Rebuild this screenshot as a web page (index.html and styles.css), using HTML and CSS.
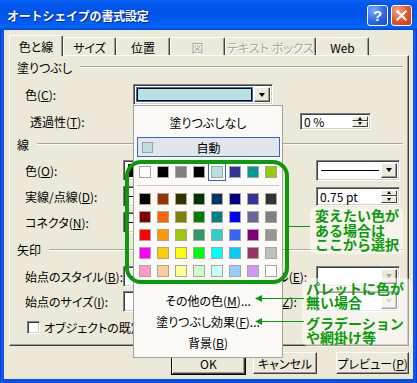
FILE: index.html
```html
<!DOCTYPE html>
<html lang="ja">
<head>
<meta charset="utf-8">
<title>オートシェイプの書式設定</title>
<link rel="stylesheet" href="styles.css">
</head>
<body>
<div class="window">
  <div class="titlebar">
    <span class="title">オートシェイプの書式設定</span>
    <div class="tb-btns">
      <span class="tb-btn help">?</span>
      <span class="tb-btn close"><svg width="11" height="11" viewBox="0 0 11 11"><path d="M1.5 1.5 L9.5 9.5 M9.5 1.5 L1.5 9.5" stroke="#fff" stroke-width="2.2" stroke-linecap="square"/></svg></span>
    </div>
  </div>
  <div class="client">
    <div class="tabs">
      <div class="tab sel w54">色と線</div>
      <div class="tab w53">サイズ</div>
      <div class="tab w54">位置</div>
      <div class="tab w55 dis">図</div>
      <div class="tab w91 dis">テキスト ボックス</div>
      <div class="tab w53">Web</div>
    </div>
    <div class="panel">
      <div class="grp h22"><span>塗りつぶし</span><span class="line"></span></div>
      <div class="row h33">
        <span class="lbl-c">色(<u>C</u>):</span>
        <span class="combo cfill w140"><span class="field"><span class="sw"></span></span><span class="dd"></span></span>
      </div>
      <div class="row h20 ind">
        <span class="lbl-t">透過性(<u>T</u>):</span>
        <span class="slider"></span>
        <span class="spin sp-t"><span class="val">0 %</span><span class="arr"><span class="up"></span><span class="dn"></span></span></span>
      </div>
      <div class="grp h26"><span>線</span><span class="line"></span></div>
      <div class="row h26">
        <span class="lbl-l">色(<u>O</u>):</span>
        <span class="combo w80"><span class="field"><span class="sw black"></span></span><span class="dd"></span></span>
        <span class="combo w84 push"><span class="field linefld"></span><span class="dd"></span></span>
      </div>
      <div class="row h26">
        <span class="lbl-l">実線/点線(<u>D</u>):</span>
        <span class="combo w80"><span class="field linefld"></span><span class="dd"></span></span>
        <span class="spin sp-w push"><span class="val">0.75 pt</span><span class="arr"><span class="up"></span><span class="dn"></span></span></span>
      </div>
      <div class="row h26">
        <span class="lbl-l">コネクタ(<u>N</u>):</span>
        <span class="combo w80"><span class="field linefld"></span><span class="dd"></span></span>
      </div>
      <div class="grp h29"><span>矢印</span><span class="line"></span></div>
      <div class="row h24">
        <span class="lbl-l">始点のスタイル(<u>B</u>):</span>
        <span class="combo w80"><span class="field linefld"></span><span class="dd"></span></span>
        <span class="lbl-r">終点のスタイル(<u>E</u>):</span>
        <span class="combo w84 dis"><span class="field"></span><span class="dd"></span></span>
      </div>
      <div class="row h26">
        <span class="lbl-l">始点のサイズ(<u>I</u>):</span>
        <span class="combo w80"><span class="field"></span><span class="dd"></span></span>
        <span class="lbl-r">終点のサイズ(<u>Z</u>):</span>
        <span class="combo w84 dis"><span class="field"></span><span class="dd"></span></span>
      </div>
      <div class="row h26 chkrow">
        <span class="chk"></span><span class="chk-lbl">オブジェクトの既定値にする(<u>F</u>)</span>
      </div>
    </div>
    <div class="buttons">
      <span class="btn b-ok">OK</span>
      <span class="btn b-cancel">キャンセル</span>
      <span class="btn b-prev">プレビュー(<u>P</u>)</span>
    </div>
  </div>

  <div class="popup">
    <div class="pop-none">塗りつぶしなし</div>
    <div class="pop-auto"><span class="asw"></span><span class="atext">自動</span><span></span></div>
    <div class="pal">
      <span class="cell"><i style="background:#FFFFFF"></i></span>
      <span class="cell"><i style="background:#000000"></i></span>
      <span class="cell"><i style="background:#808080"></i></span>
      <span class="cell"><i style="background:#000000"></i></span>
      <span class="cell selc"><i style="background:#B7E0E3"></i></span>
      <span class="cell"><i style="background:#333399"></i></span>
      <span class="cell"><i style="background:#009999"></i></span>
      <span class="cell"><i style="background:#99CC00"></i></span>
    </div>
    <div class="sep"></div>
    <div class="pal">
      <span class="cell"><i style="background:#000000"></i></span>
      <span class="cell"><i style="background:#993300"></i></span>
      <span class="cell"><i style="background:#333300"></i></span>
      <span class="cell"><i style="background:#003300"></i></span>
      <span class="cell"><i style="background:#003366"></i></span>
      <span class="cell"><i style="background:#000080"></i></span>
      <span class="cell"><i style="background:#333399"></i></span>
      <span class="cell"><i style="background:#333333"></i></span>
      <span class="cell"><i style="background:#800000"></i></span>
      <span class="cell"><i style="background:#FF6600"></i></span>
      <span class="cell"><i style="background:#808000"></i></span>
      <span class="cell"><i style="background:#008000"></i></span>
      <span class="cell"><i style="background:#008080"></i></span>
      <span class="cell"><i style="background:#0000FF"></i></span>
      <span class="cell"><i style="background:#666699"></i></span>
      <span class="cell"><i style="background:#808080"></i></span>
      <span class="cell"><i style="background:#FF0000"></i></span>
      <span class="cell"><i style="background:#FF9900"></i></span>
      <span class="cell"><i style="background:#99CC00"></i></span>
      <span class="cell"><i style="background:#339966"></i></span>
      <span class="cell"><i style="background:#33CCCC"></i></span>
      <span class="cell"><i style="background:#3366FF"></i></span>
      <span class="cell"><i style="background:#800080"></i></span>
      <span class="cell"><i style="background:#969696"></i></span>
      <span class="cell"><i style="background:#FF00FF"></i></span>
      <span class="cell"><i style="background:#FFCC00"></i></span>
      <span class="cell"><i style="background:#FFFF00"></i></span>
      <span class="cell"><i style="background:#00FF00"></i></span>
      <span class="cell"><i style="background:#00FFFF"></i></span>
      <span class="cell"><i style="background:#00CCFF"></i></span>
      <span class="cell"><i style="background:#993366"></i></span>
      <span class="cell"><i style="background:#C0C0C0"></i></span>
      <span class="cell"><i style="background:#FF99CC"></i></span>
      <span class="cell"><i style="background:#FFCC99"></i></span>
      <span class="cell"><i style="background:#FFFF99"></i></span>
      <span class="cell"><i style="background:#CCFFCC"></i></span>
      <span class="cell"><i style="background:#CCFFFF"></i></span>
      <span class="cell"><i style="background:#99CCFF"></i></span>
      <span class="cell"><i style="background:#CC99FF"></i></span>
      <span class="cell"><i style="background:#FFFFFF"></i></span>
    </div>
    <div class="menu">
      <div class="mi">その他の色(<u>M</u>)...</div>
      <div class="mi">塗りつぶし効果(<u>F</u>)...</div>
      <div class="mi">背景(<u>B</u>)</div>
    </div>
  </div>

  <div class="annot-rect"></div>
  <div class="connector"></div>
  <div class="callout c1">変えたい色が<br>ある場合は<br>ここから選択</div>
  <div class="callout c2"><p>パレットに色が<br>無い場合</p><p>グラデーション<br>や網掛け等</p></div>
  <svg class="arrows" width="50" height="34" viewBox="0 0 50 34">
    <line x1="7" y1="5.5" x2="50" y2="5.5" stroke="#0B9A0B" stroke-width="1"/>
    <polygon points="1,5.5 8,2 8,9" fill="#0B9A0B"/>
    <line x1="7" y1="28.5" x2="50" y2="28.5" stroke="#0B9A0B" stroke-width="1"/>
    <polygon points="1,28.5 8,25 8,32" fill="#0B9A0B"/>
  </svg>
</div>
</body>
</html>
```

FILE: styles.css
```css
* { box-sizing: border-box; }
html, body { margin: 0; padding: 0; }
body {
  width: 417px;
  height: 383px;
  overflow: hidden;
  font-family: "Noto Sans CJK JP", "Noto Sans", sans-serif;
  font-size: 12px;
  color: #000;
  font-feature-settings: "palt";
}
u { text-decoration: underline; text-underline-offset: 1px; }

.window {
  position: relative;
  width: 417px;
  height: 383px;
  background: linear-gradient(90deg, #0831D9 0, #1660F0 2px, #0A4FE6 4px, #0A4FE6 413px, #1660F0 415px, #0831D9 417px);
  display: flex;
  flex-direction: column;
}

/* title bar */
.titlebar {
  height: 30px;
  flex: none;
  display: flex;
  align-items: center;
  padding: 0 5px 0 7px;
  background: linear-gradient(#0A62F5 0%, #0058EE 12%, #0052E8 45%, #0060F6 80%, #0066FA 90%, #0045D0 100%);
}
.title {
  flex: 1;
  color: #fff;
  font-weight: bold;
  font-size: 12px;
  letter-spacing: -0.2px;
  font-feature-settings: normal;
  text-shadow: 1px 1px 0 #0A1E8C;
}
.tb-btns { display: flex; gap: 3px; }
.tb-btn {
  width: 21px;
  height: 21px;
  border: 1px solid #fff;
  border-radius: 3px;
  display: flex;
  align-items: center;
  justify-content: center;
  color: #fff;
  font: bold 15px "Liberation Sans", sans-serif;
}
.help { background: radial-gradient(circle at 30% 25%, #7AAAFF 0%, #2E66EA 55%, #1A45C4 100%); }
.close { background: radial-gradient(circle at 30% 25%, #F5A283 0%, #E2532B 55%, #C2361A 100%); }

/* client area */
.client {
  flex: 1;
  margin: 0 4px 4px;
  padding: 5px 4px 0 5px;
  background: #ECE9D8;
  display: flex;
  flex-direction: column;
}

/* tabs */
.tabs {
  display: flex;
  align-items: flex-end;
  height: 20px;
  position: relative;
  z-index: 1;
}
.tab {
  height: 18px;
  border: 1px solid;
  border-bottom: none;
  border-color: #fff #404040 transparent #fff;
  box-shadow: inset -1px 0 #A09C8C;
  border-radius: 2px 2px 0 0;
  background: #ECE9D8;
  display: flex;
  align-items: center;
  justify-content: center;
  white-space: nowrap;
  padding-top: 1px;
}
.tab.sel { height: 21px; margin-bottom: -1px; padding-top: 0; }
.tab.dis { color: #ACA899; text-shadow: 1px 1px 0 #fff; }
.w53 { width: 53px; }
.w54 { width: 54px; }
.w55 { width: 55px; }
.w91 { width: 91px; }

/* panel */
.panel {
  height: 291px;
  border: 1px solid;
  border-color: #fff #404040 #404040 #fff;
  box-shadow: inset -1px -1px #A09C8C;
  display: flex;
  flex-direction: column;
}
.grp {
  display: flex;
  align-items: center;
  padding: 0 5px 0 7px;
  flex: none;
}
.grp .line {
  flex: 1;
  margin-left: 8px;
  height: 2px;
  border-top: 1px solid #ACA899;
  border-bottom: 1px solid #fff;
}
.row {
  display: flex;
  align-items: center;
  padding-left: 15px;
  flex: none;
  white-space: nowrap;
}
.row.ind { padding-left: 20px; }
.h20 { height: 20px; }
.h22 { height: 22px; }
.h24 { height: 24px; }
.h26 { height: 26px; }
.h29 { height: 29px; }
.h33 { height: 33px; }

.lbl-c { width: 108px; }
.lbl-t { width: 103px; }
.lbl-l { width: 98px; }
.lbl-r { width: 106px; margin-left: 7px; }
.push { margin-left: 113px; }
.slider { width: 140px; height: 4px; margin-right: 27px; }

/* combo boxes */
.combo {
  display: flex;
  height: 21px;
  background: #fff;
  border: 1px solid;
  border-color: #808080 #fff #fff #808080;
  box-shadow: inset 1px 1px #404040, inset -1px -1px #D4D0C8;
  padding: 2px;
}
.w80 { width: 80px; }
.w84 { width: 84px; }
.w140 { width: 140px; }
.combo .field {
  flex: 1;
  display: flex;
  align-items: center;
  padding: 1px 2px;
}
.combo .sw { flex: 1; height: 100%; }
.combo .sw.black { background: #000; border: 1px solid #000; }
.combo.cfill .field { background: #316AC5; padding: 1px; margin-right: 1px; }
.combo.cfill .sw { background: #B7E0E3; border: 1px solid #000; }
.linefld::before { content: ""; flex: 1; height: 1px; background: #000; }
.dd {
  width: 16px;
  background: #ECE9D8;
  border: 1px solid;
  border-color: #fff #404040 #404040 #fff;
  box-shadow: inset -1px -1px #A09C8C;
  display: flex;
  align-items: center;
  justify-content: center;
}
.dd::after {
  content: "";
  border-left: 3.5px solid transparent;
  border-right: 3.5px solid transparent;
  border-top: 4px solid #000;
}
.combo.dis .dd::after { border-top-color: #ACA899; }

/* spinners */
.spin {
  display: flex;
  background: #fff;
  border: 1px solid;
  border-color: #808080 #fff #fff #808080;
  box-shadow: inset 1px 1px #404040, inset -1px -1px #D4D0C8;
  padding: 2px;
}
.sp-t { width: 71px; height: 17px; }
.sp-w { width: 84px; height: 19px; }
.spin .val {
  flex: 1;
  display: flex;
  align-items: center;
  padding-left: 1px;
  font-size: 12px;
}
.spin .arr { width: 16px; display: flex; flex-direction: column; }
.spin .up, .spin .dn {
  flex: 1;
  background: #ECE9D8;
  border: 1px solid;
  border-color: #fff #404040 #404040 #fff;
  display: flex;
  align-items: center;
  justify-content: center;
}
.spin .up::after {
  content: "";
  border-left: 2.5px solid transparent;
  border-right: 2.5px solid transparent;
  border-bottom: 3px solid #000;
}
.spin .dn::after {
  content: "";
  border-left: 2.5px solid transparent;
  border-right: 2.5px solid transparent;
  border-top: 3px solid #000;
}

/* checkbox */
.chkrow { padding-left: 17px; }
.chk {
  width: 13px;
  height: 13px;
  background: #fff;
  border: 1px solid;
  border-color: #808080 #fff #fff #808080;
  box-shadow: inset 1px 1px #404040, inset -1px -1px #D4D0C8;
}
.chk-lbl { margin-left: 4px; }

/* bottom buttons */
.buttons {
  display: flex;
  padding-top: 6px;
}
.btn {
  height: 22px;
  display: flex;
  align-items: center;
  justify-content: center;
  background: #ECE9D8;
  border: 1px solid;
  border-color: #fff #404040 #404040 #fff;
  box-shadow: inset -1px -1px #A09C8C;
  white-space: nowrap;
}
.b-ok { width: 73px; margin-left: 163px; outline: 1px solid #000; }
.b-cancel { width: 65px; margin-left: 8px; }
.b-prev { width: 73px; margin-left: 19px; }

/* dropdown popup */
.popup {
  position: absolute;
  left: 133px;
  top: 105px;
  width: 150px;
  height: 253px;
  background: #FBFAF7;
  border: 1px solid #A3A29C;
  display: flex;
  flex-direction: column;
}
.pop-none {
  height: 28px;
  margin-top: 2px;
  display: flex;
  align-items: center;
  justify-content: center;
}
.pop-auto {
  height: 20px;
  margin: 1px 2px 0 3px;
  border: 1px solid #316AC5;
  background: #E1E6EA;
  display: grid;
  grid-template-columns: 16px 1fr 16px;
  align-items: center;
}
.asw {
  width: 11px;
  height: 11px;
  margin-left: 4px;
  background: #B7E0E3;
  border: 1px solid #A0A0A0;
}
.atext { text-align: center; }
.pal {
  display: grid;
  grid-template-columns: repeat(8, 18px);
  grid-auto-rows: 18px;
  margin-left: 2px;
  margin-top: 6px;
}
.sep + .pal { margin-top: 0; }
.cell {
  display: flex;
  align-items: center;
  justify-content: center;
}
.cell i {
  display: block;
  width: 12px;
  height: 12px;
  border: 1px solid #A8A69E;
}
.cell.selc { border: 1px solid #316AC5; }
.sep {
  height: 1px;
  background: #C8C6BE;
  margin: 4px 3px 4px 3px;
}
.menu { margin-top: 10px; }
.mi {
  height: 21px;
  display: flex;
  align-items: center;
  justify-content: center;
  white-space: nowrap;
}

/* annotations */
.annot-rect {
  position: absolute;
  left: 125px;
  top: 160px;
  width: 164px;
  height: 124px;
  border: 4px solid #0B9A0B;
  border-radius: 16px;
}
.connector {
  position: absolute;
  left: 289px;
  top: 226px;
  width: 21px;
  height: 1px;
  background: #0B9A0B;
}
.callout {
  position: absolute;
  background: rgba(255, 255, 255, 0.5);
  color: #0B9A0B;
  font-weight: bold;
  font-size: 14px;
  font-feature-settings: normal;
  white-space: nowrap;
}
.c1 {
  left: 310px;
  top: 207px;
  width: 93px;
  height: 47px;
  border-radius: 6px;
  padding: 1px 0 0 5px;
  line-height: 14.5px;
}
.c2 {
  left: 302px;
  top: 278px;
  width: 111px;
  height: 69px;
  border-radius: 8px;
  padding: 3px 0 0 4px;
  line-height: 14px;
}
.c2 p { margin: 0 0 7px; }
.arrows {
  position: absolute;
  left: 254px;
  top: 293px;
}
```
